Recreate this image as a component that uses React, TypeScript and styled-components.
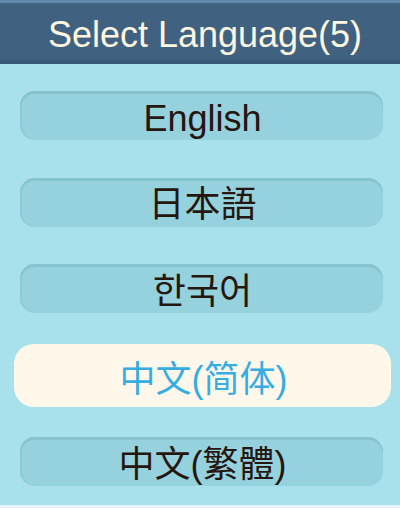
import * as React from "react";
import styled, { createGlobalStyle } from "styled-components";

const GlobalStyle = createGlobalStyle`
  html, body {
    margin: 0;
    padding: 0;
    background: #a8e1eb;
  }
  body {
    font-family: "Liberation Sans", Arial, "Noto Sans CJK SC", sans-serif;
  }
`;

const Screen = styled.div`
  width: 400px;
  height: 508px;
  display: flex;
  flex-direction: column;
  background: #a8e1eb;
  overflow: hidden;
  box-sizing: border-box;
  border-bottom: 3px solid #e6f6f8;
`;

const Header = styled.div`
  height: 64px;
  box-sizing: border-box;
  display: flex;
  align-items: center;
  justify-content: center;
  padding-left: 10px;
  padding-top: 8px;
  background: #40617f;
  border-top: 3px solid #6188ad;
  border-bottom: 4px solid #375872;
  color: #fdf7e1;
  font-size: 36px;
  line-height: 1;
`;

const List = styled.div`
  flex: 1;
  display: grid;
  grid-auto-rows: 86.5px;
  padding-top: 9px;
`;

const Row = styled.div`
  display: flex;
  align-items: center;
  justify-content: center;
`;

const LangButton = styled.div<{ $active?: boolean }>`
  box-sizing: border-box;
  width: ${(p) => (p.$active ? "377px" : "363px")};
  height: ${(p) => (p.$active ? "63px" : "49px")};
  margin-left: ${(p) => (p.$active ? "5px" : "3px")};
  border-radius: ${(p) => (p.$active ? "20px" : "15px")};
  background: ${(p) => (p.$active ? "#fff8ea" : "#95d2de")};
  box-shadow: ${(p) =>
    p.$active ? "none" : "inset 0 3px 0 #86c3cf, inset 2px 0 0 #8ecbd7"};
  display: flex;
  align-items: center;
  justify-content: center;
  padding-top: ${(p) => (p.$active ? "9px" : "6px")};
  padding-left: 2px;
  color: ${(p) => (p.$active ? "#36ade2" : "#25160f")};
  font-family: "Liberation Sans", Arial, "Noto Sans CJK SC", "Noto Sans CJK JP",
    "Noto Sans CJK KR", sans-serif;
  font-size: 36px;
  line-height: 1;
`;

const languages = [
  { name: "English" },
  { name: "日本語" },
  { name: "한국어" },
  { name: "中文(简体)", active: true },
  { name: "中文(繁體)" },
];

const App: React.FC = () => {
  return (
    <>
      <GlobalStyle />
      <Screen>
        <Header>Select Language(5)</Header>
        <List>
          {languages.map((lang) => (
            <Row key={lang.name}>
              <LangButton $active={lang.active}>{lang.name}</LangButton>
            </Row>
          ))}
        </List>
      </Screen>
    </>
  );
};

export default App;
